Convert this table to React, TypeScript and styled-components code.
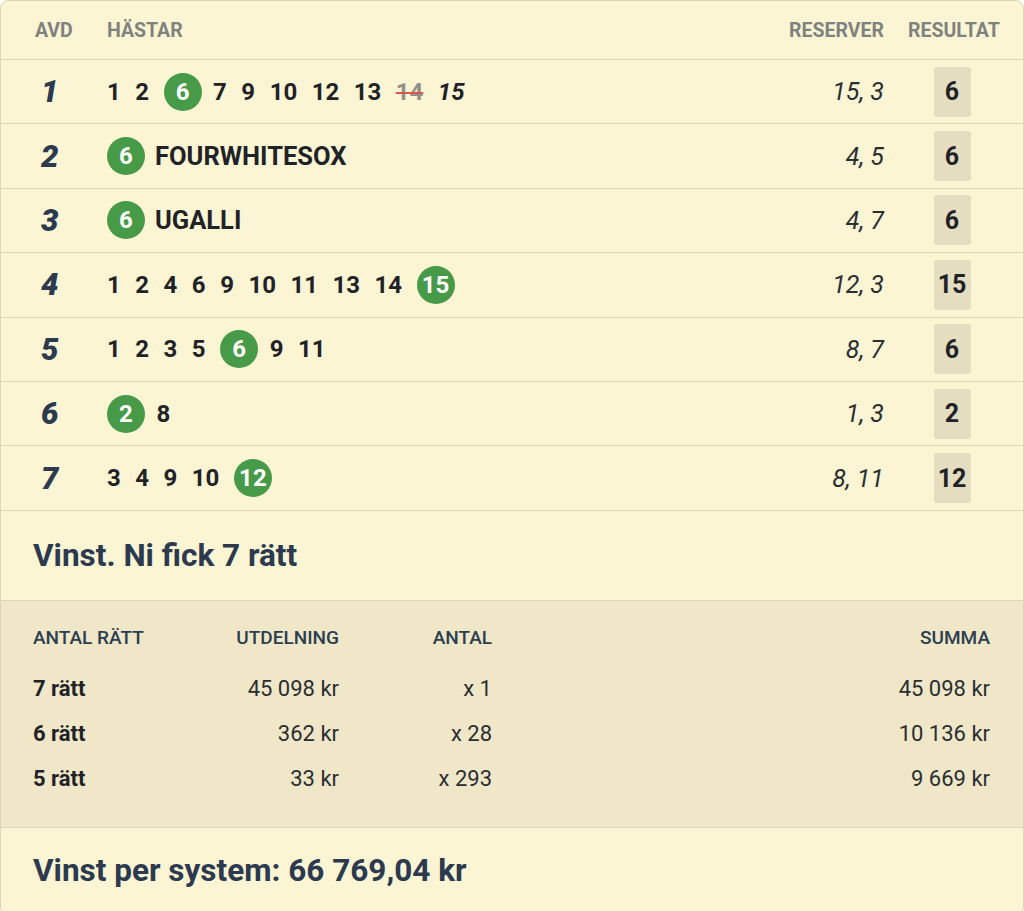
import styled, { createGlobalStyle } from "styled-components";

const GlobalStyle = createGlobalStyle`
    html, body {
        margin: 0;
        padding: 0;
        background: #fff;
        font-family: Roboto, "Liberation Sans", sans-serif;
    }
`;

interface Horse {
    n: number;
    name?: string;
    winner?: boolean;
    scratched?: boolean;
    reserve?: boolean;
}

interface Leg {
    avd: number;
    horses: Horse[];
    reserves: string;
    result: number;
}

const legs: Leg[] = [
    {
        avd: 1,
        horses: [
            { n: 1 }, { n: 2 }, { n: 6, winner: true }, { n: 7 }, { n: 9 }, { n: 10 },
            { n: 12 }, { n: 13 }, { n: 14, scratched: true }, { n: 15, reserve: true },
        ],
        reserves: "15, 3",
        result: 6,
    },
    { avd: 2, horses: [{ n: 6, winner: true, name: "FOURWHITESOX" }], reserves: "4, 5", result: 6 },
    { avd: 3, horses: [{ n: 6, winner: true, name: "UGALLI" }], reserves: "4, 7", result: 6 },
    {
        avd: 4,
        horses: [
            { n: 1 }, { n: 2 }, { n: 4 }, { n: 6 }, { n: 9 }, { n: 10 }, { n: 11 },
            { n: 13 }, { n: 14 }, { n: 15, winner: true },
        ],
        reserves: "12, 3",
        result: 15,
    },
    {
        avd: 5,
        horses: [{ n: 1 }, { n: 2 }, { n: 3 }, { n: 5 }, { n: 6, winner: true }, { n: 9 }, { n: 11 }],
        reserves: "8, 7",
        result: 6,
    },
    { avd: 6, horses: [{ n: 2, winner: true }, { n: 8 }], reserves: "1, 3", result: 2 },
    {
        avd: 7,
        horses: [{ n: 3 }, { n: 4 }, { n: 9 }, { n: 10 }, { n: 12, winner: true }],
        reserves: "8, 11",
        result: 12,
    },
];

const payouts = [
    { label: "7 rätt", amount: "45 098 kr", count: "x 1", sum: "45 098 kr" },
    { label: "6 rätt", amount: "362 kr", count: "x 28", sum: "10 136 kr" },
    { label: "5 rätt", amount: "33 kr", count: "x 293", sum: "9 669 kr" },
];

export default function App() {
    return (
        <>
            <GlobalStyle />
            <Card>
                <LegRow $header>
                    <HeadCell>AVD</HeadCell>
                    <HeadCell>HÄSTAR</HeadCell>
                    <HeadCell $align="right">RESERVER</HeadCell>
                    <HeadCell $align="center">RESULTAT</HeadCell>
                </LegRow>
                {legs.map((leg) => (
                    <LegRow key={leg.avd}>
                        <AvdNumber>{leg.avd}</AvdNumber>
                        <Horses>
                            {leg.horses.map((h) => (
                                <HorseItem key={h.n}>
                                    {h.winner ? (
                                        <WinnerBall>{h.n}</WinnerBall>
                                    ) : (
                                        <HorseNumber $scratched={h.scratched} $reserve={h.reserve}>
                                            {h.n}
                                        </HorseNumber>
                                    )}
                                    {h.name && <HorseName>{h.name}</HorseName>}
                                </HorseItem>
                            ))}
                        </Horses>
                        <Reserves>{leg.reserves}</Reserves>
                        <ResultCell>
                            <ResultBox>{leg.result}</ResultBox>
                        </ResultCell>
                    </LegRow>
                ))}
                <Summary>Vinst. Ni fick 7 rätt</Summary>
                <PayoutTable>
                    <PayoutRow $header>
                        <span>ANTAL RÄTT</span>
                        <span>UTDELNING</span>
                        <span>ANTAL</span>
                        <span>SUMMA</span>
                    </PayoutRow>
                    {payouts.map((p) => (
                        <PayoutRow key={p.label}>
                            <strong>{p.label}</strong>
                            <span>{p.amount}</span>
                            <span>{p.count}</span>
                            <span>{p.sum}</span>
                        </PayoutRow>
                    ))}
                </PayoutTable>
                <Total>Vinst per system: 66 769,04 kr</Total>
            </Card>
        </>
    );
}

const Card = styled.div`
    width: 1024px;
    box-sizing: border-box;
    background: #fcf5d3;
    border: 1px solid #ddd6b5;
    border-radius: 8px;
    overflow: hidden;
`;

const LegRow = styled.div<{ $header?: boolean }>`
    display: grid;
    grid-template-columns: 82px 1fr auto 88px;
    column-gap: 24px;
    padding-right: 27px;
    align-items: center;
    box-sizing: border-box;
    height: ${({ $header }) => ($header ? "59px" : "64.4px")};
    border-bottom: 1px solid #ddd6b5;
`;

const HeadCell = styled.div<{ $align?: string }>`
    font-size: 19.5px;
    font-weight: 700;
    color: #7e8380;
    text-align: ${({ $align }) => $align || "left"};

    &:first-child {
        padding-left: 34px;
    }
`;

const AvdNumber = styled.div`
    padding-left: 40px;
    font-size: 31px;
    font-weight: 900;
    font-style: italic;
    color: #2b3a4f;
    line-height: 1;
`;

const Horses = styled.div`
    display: flex;
    align-items: center;
    gap: 14.5px;
`;

const HorseItem = styled.div`
    display: flex;
    align-items: center;
    gap: 13px;
`;

const HorseNumber = styled.span<{ $scratched?: boolean; $reserve?: boolean }>`
    font-size: 24px;
    font-weight: 700;
    color: ${({ $scratched }) => ($scratched ? "#8f918a" : "#1f2328")};
    font-style: ${({ $reserve }) => ($reserve ? "italic" : "normal")};
    text-decoration: ${({ $scratched }) => ($scratched ? "line-through" : "none")};
    text-decoration-color: #d65a4f;
    text-decoration-thickness: 2px;
`;

const WinnerBall = styled.span`
    width: 38px;
    height: 38px;
    border-radius: 50%;
    background: #469a48;
    color: #fff;
    font-size: 24px;
    font-weight: 700;
    display: flex;
    align-items: center;
    justify-content: center;
    margin-right: -3px;
`;

const HorseName = styled.span`
    font-size: 25.5px;
    font-weight: 700;
    color: #1f2328;
`;

const Reserves = styled.div`
    font-size: 25px;
    font-style: italic;
    color: #2a2e33;
    text-align: right;
`;

const ResultCell = styled.div`
    display: flex;
    justify-content: center;
`;

const ResultBox = styled.div`
    width: 37px;
    height: 50px;
    border-radius: 3px;
    background: #e4ddc0;
    display: flex;
    align-items: center;
    justify-content: center;
    font-size: 25px;
    font-weight: 700;
    color: #1f2328;
`;

const Summary = styled.div`
    height: 89px;
    display: flex;
    align-items: center;
    padding-left: 32px;
    font-size: 31.5px;
    font-weight: 700;
    color: #2b3a4f;
    border-bottom: 1px solid #ddd6b5;
`;

const PayoutTable = styled.div`
    background: #efe7c7;
    padding: 22px 33px 26px 32px;
    border-bottom: 1px solid #ddd6b5;
`;

const PayoutRow = styled.div<{ $header?: boolean }>`
    display: grid;
    grid-template-columns: 150px 156px 153px 1fr;
    align-items: center;
    height: ${({ $header }) => ($header ? "30px" : "45px")};
    margin-bottom: ${({ $header }) => ($header ? "13px" : "0")};
    font-size: ${({ $header }) => ($header ? "19px" : "22px")};
    font-weight: ${({ $header }) => ($header ? 500 : 400)};
    color: ${({ $header }) => ($header ? "#2c3e50" : "#2a2e33")};

    & > *:not(:first-child) {
        text-align: right;
    }

    strong {
        font-weight: 700;
        color: #1f2328;
    }
`;

const Total = styled.div`
    height: 86px;
    display: flex;
    align-items: center;
    padding-left: 32px;
    font-size: 31.5px;
    font-weight: 700;
    color: #2b3a4f;
`;
